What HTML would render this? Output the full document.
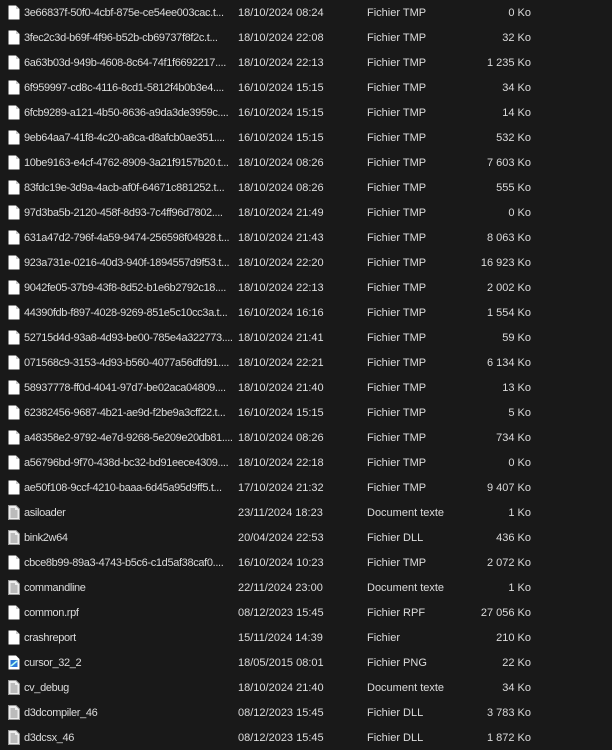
<!DOCTYPE html>
<html><head><meta charset="utf-8"><style>
body{margin:0;background:#191919;width:612px;height:750px;overflow:hidden;font-family:"Liberation Sans",sans-serif;font-size:11px;color:#dcdcdc}
.r{position:absolute;left:0;width:612px;height:25px}
.i{position:absolute;left:8px;top:5px;width:12px;height:15px}
.n{position:absolute;left:24px;top:7px;white-space:nowrap;letter-spacing:-0.35px}
.d{position:absolute;left:238px;top:7px}
.t{position:absolute;left:367px;top:7px}
.s{position:absolute;right:81px;top:7px;text-align:right}
</style></head><body>
<svg width="0" height="0" style="position:absolute"><defs>
<symbol id="f" viewBox="0 0 12 15"><path d="M0.5 0.5H8L11.5 4V14.5H0.5Z" fill="#fff"/><path d="M8 0.5V4H11.5" fill="#ccc"/></symbol>
<symbol id="l" viewBox="0 0 12 15"><path d="M0.5 0.5H8L11.5 4V14.5H0.5Z" fill="#eee" stroke="#999" stroke-width="1"/><path d="M2.5 4H7M2.5 6H9.5M2.5 8H9.5M2.5 10H9.5M2.5 12H9.5" stroke="#888" stroke-width="1"/></symbol>
<symbol id="p" viewBox="0 0 12 15"><path d="M0.5 0.5H8L11.5 4V14.5H0.5Z" fill="#fff"/><rect x="2.5" y="5" width="7" height="7" fill="#2a7ad8"/><path d="M3 11L9 6" stroke="#bfe" stroke-width="1.5"/></symbol>
</defs></svg>
<div id="c"></div>
<script>
var R=[
["f","3e66837f-50f0-4cbf-875e-ce54ee003cac.t...","18/10/2024 08:24","Fichier TMP","0 Ko"],
["f","3fec2c3d-b69f-4f96-b52b-cb69737f8f2c.t...","18/10/2024 22:08","Fichier TMP","32 Ko"],
["f","6a63b03d-949b-4608-8c64-74f1f6692217....","18/10/2024 22:13","Fichier TMP","1 235 Ko"],
["f","6f959997-cd8c-4116-8cd1-5812f4b0b3e4....","16/10/2024 15:15","Fichier TMP","34 Ko"],
["f","6fcb9289-a121-4b50-8636-a9da3de3959c....","16/10/2024 15:15","Fichier TMP","14 Ko"],
["f","9eb64aa7-41f8-4c20-a8ca-d8afcb0ae351....","16/10/2024 15:15","Fichier TMP","532 Ko"],
["f","10be9163-e4cf-4762-8909-3a21f9157b20.t...","18/10/2024 08:26","Fichier TMP","7 603 Ko"],
["f","83fdc19e-3d9a-4acb-af0f-64671c881252.t...","18/10/2024 08:26","Fichier TMP","555 Ko"],
["f","97d3ba5b-2120-458f-8d93-7c4ff96d7802....","18/10/2024 21:49","Fichier TMP","0 Ko"],
["f","631a47d2-796f-4a59-9474-256598f04928.t...","18/10/2024 21:43","Fichier TMP","8 063 Ko"],
["f","923a731e-0216-40d3-940f-1894557d9f53.t...","18/10/2024 22:20","Fichier TMP","16 923 Ko"],
["f","9042fe05-37b9-43f8-8d52-b1e6b2792c18....","18/10/2024 22:13","Fichier TMP","2 002 Ko"],
["f","44390fdb-f897-4028-9269-851e5c10cc3a.t...","16/10/2024 16:16","Fichier TMP","1 554 Ko"],
["f","52715d4d-93a8-4d93-be00-785e4a322773....","18/10/2024 21:41","Fichier TMP","59 Ko"],
["f","071568c9-3153-4d93-b560-4077a56dfd91....","18/10/2024 22:21","Fichier TMP","6 134 Ko"],
["f","58937778-ff0d-4041-97d7-be02aca04809....","18/10/2024 21:40","Fichier TMP","13 Ko"],
["f","62382456-9687-4b21-ae9d-f2be9a3cff22.t...","16/10/2024 15:15","Fichier TMP","5 Ko"],
["f","a48358e2-9792-4e7d-9268-5e209e20db81....","18/10/2024 08:26","Fichier TMP","734 Ko"],
["f","a56796bd-9f70-438d-bc32-bd91eece4309....","18/10/2024 22:18","Fichier TMP","0 Ko"],
["f","ae50f108-9ccf-4210-baaa-6d45a95d9ff5.t...","17/10/2024 21:32","Fichier TMP","9 407 Ko"],
["l","asiloader","23/11/2024 18:23","Document texte","1 Ko"],
["l","bink2w64","20/04/2024 22:53","Fichier DLL","436 Ko"],
["f","cbce8b99-89a3-4743-b5c6-c1d5af38caf0....","16/10/2024 10:23","Fichier TMP","2 072 Ko"],
["l","commandline","22/11/2024 23:00","Document texte","1 Ko"],
["f","common.rpf","08/12/2023 15:45","Fichier RPF","27 056 Ko"],
["f","crashreport","15/11/2024 14:39","Fichier","210 Ko"],
["p","cursor_32_2","18/05/2015 08:01","Fichier PNG","22 Ko"],
["l","cv_debug","18/10/2024 21:40","Document texte","34 Ko"],
["l","d3dcompiler_46","08/12/2023 15:45","Fichier DLL","3 783 Ko"],
["l","d3dcsx_46","08/12/2023 15:45","Fichier DLL","1 872 Ko"]];
var h="";R.forEach(function(r,k){h+='<div class="r" style="top:'+(k*25)+'px"><svg class="i"><use href="#'+r[0]+'"/></svg><span class="n">'+r[1]+'</span><span class="d">'+r[2]+'</span><span class="t">'+r[3]+'</span><span class="s">'+r[4]+'</span></div>'});
document.getElementById("c").innerHTML=h;
</script>
</body></html>
